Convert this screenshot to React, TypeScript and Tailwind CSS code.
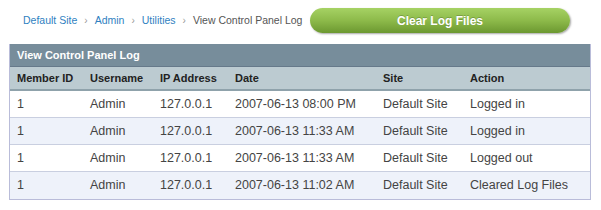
const rows = [
  { id: "1", user: "Admin", ip: "127.0.0.1", date: "2007-06-13 08:00 PM", site: "Default Site", action: "Logged in" },
  { id: "1", user: "Admin", ip: "127.0.0.1", date: "2007-06-13 11:33 AM", site: "Default Site", action: "Logged in" },
  { id: "1", user: "Admin", ip: "127.0.0.1", date: "2007-06-13 11:33 AM", site: "Default Site", action: "Logged out" },
  { id: "1", user: "Admin", ip: "127.0.0.1", date: "2007-06-13 11:02 AM", site: "Default Site", action: "Cleared Log Files" },
];

const cols = "grid grid-cols-[73px_70px_75px_148px_87px_1fr] pl-[7px]";

export default function App() {
  return (
    <div className="w-[601px] h-[210px] bg-white font-['Liberation_Sans',Arial,sans-serif] text-[12px] text-[#333]">
      <div className="flex items-center h-[40px] pl-[23px] pt-[1px]">
        <nav className="flex items-center gap-[7px] w-[287px] shrink-0 whitespace-nowrap text-[10.5px]">
          <a className="text-[#2f7fc1]">Default Site</a>
          <span className="text-[#999] text-[10px]">›</span>
          <a className="text-[#2f7fc1]">Admin</a>
          <span className="text-[#999] text-[10px]">›</span>
          <a className="text-[#2f7fc1]">Utilities</a>
          <span className="text-[#999] text-[10px]">›</span>
          <span className="text-[#555]">View Control Panel Log</span>
        </nav>
        <button className="w-[260px] h-[25px] shrink-0 rounded-full bg-gradient-to-b from-[#a6d264] via-[#8dba4a] to-[#6c9830] text-white font-bold text-[12px] shadow-[1px_1px_2px_rgba(0,0,0,0.35)] [text-shadow:0_-1px_0_rgba(0,0,0,0.2)]">
          Clear Log Files
        </button>
      </div>
      <div className="ml-[9px] mt-[4px] w-[582px] border-x border-b border-[#b9bcd9]">
        <div className="h-[23px] bg-[#778d9b] border-b border-[#66798a] text-white font-bold text-[11px] flex items-center pl-[7px]">
          View Control Panel Log
        </div>
        <div className={`${cols} h-[24px] items-center bg-[#bccbd1] border-b-2 border-[#8fa2ab] font-bold text-[11px] text-[#222]`}>
          <span>Member ID</span>
          <span>Username</span>
          <span>IP Address</span>
          <span>Date</span>
          <span>Site</span>
          <span>Action</span>
        </div>
        {rows.map((r, i) => (
          <div
            key={i}
            className={`${cols} h-[27px] items-center text-[12.5px] text-[#444] ${i < rows.length - 1 ? "border-b border-[#c9cfe0]" : ""} ${i % 2 ? "bg-[#eef2fa]" : "bg-white"}`}
          >
            <span>{r.id}</span>
            <span>{r.user}</span>
            <span>{r.ip}</span>
            <span>{r.date}</span>
            <span>{r.site}</span>
            <span>{r.action}</span>
          </div>
        ))}
      </div>
    </div>
  );
}
